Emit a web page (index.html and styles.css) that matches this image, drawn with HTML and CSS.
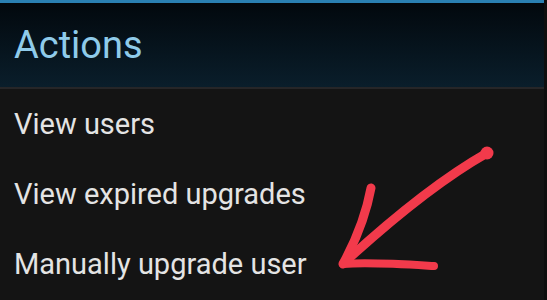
FILE: index.html
```html
<!DOCTYPE html>
<html lang="en">

<head>
	<meta charset="UTF-8">
	<meta name="viewport" content="width=device-width, initial-scale=1.0">
	<title>Actions</title>
	<link rel="stylesheet" href="styles.css">
</head>

<body>

	<div class="screen">
		<header class="actions-header">
			<h1>Actions</h1>
		</header>

		<ul class="action-list">
			<li>View users</li>
			<li>View expired upgrades</li>
			<li>Manually upgrade user</li>
		</ul>

		<!-- hand-drawn arrow over the list -->
		<svg class="arrow" width="547" height="300" viewBox="0 0 547 300">
			<path d="M487 153 C450 174 405 207 345 262" fill="none" stroke="#f23a4b" stroke-width="9" stroke-linecap="round" />
			<circle cx="487" cy="153" r="6.5" fill="#f23a4b" />
			<path d="M371 188 C366 215 356 240 343 264" fill="none" stroke="#f23a4b" stroke-width="9" stroke-linecap="round" />
			<path d="M343 264 C370 262 400 264 434 266" fill="none" stroke="#f23a4b" stroke-width="8" stroke-linecap="round" />
		</svg>
	</div>

</body>

</html>
```

FILE: styles.css
```css
body {
	margin: 0;
	background-color: #141414;
	font-family: Roboto, "Noto Sans", sans-serif;
}

.screen {
	position: relative;
	width: 547px;
	height: 300px;
	overflow: hidden;
	border-right: 3px solid #0e0e0e;
	box-sizing: border-box;
}

.actions-header {
	border-top: 3px solid #2a80b2;
	border-bottom: 2px solid #262628;
	background: linear-gradient(to bottom, #02080d, #0a1e2b);
	height: 84px;
}

.actions-header h1 {
	margin: 0;
	padding-left: 14px;
	font-size: 38px;
	font-weight: normal;
	line-height: 84px;
	color: #8fcbea;
}

.action-list {
	list-style: none;
	margin: 0;
	padding: 0;
}

.action-list li {
	padding-left: 14px;
	font-size: 29px;
	line-height: 70px;
	color: #e4e4e4;
}

.arrow {
	position: absolute;
	top: 0;
	left: 0;
}
```
